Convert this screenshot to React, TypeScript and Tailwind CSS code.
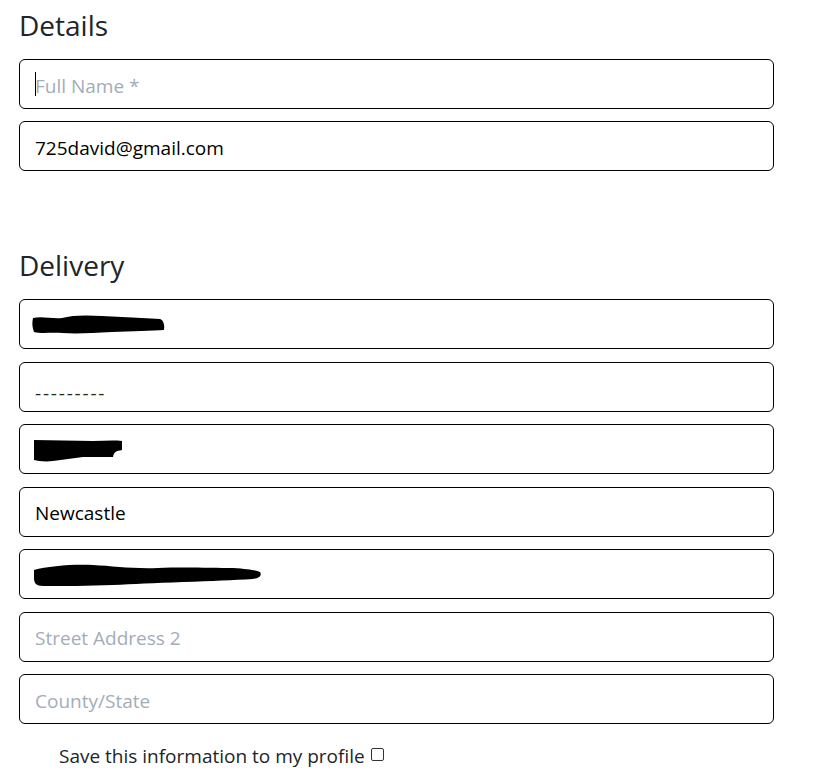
import React from "react";

const font = { fontFamily: '"Open Sans", "Noto Sans", Arial, sans-serif' };

function Field({ children }: { children?: React.ReactNode }) {
  return (
    <div className="h-[50px] w-full rounded-[6px] border border-black bg-white pl-[15px] pt-[4px] flex items-center text-[19px] text-black relative">
      {children}
    </div>
  );
}

function Placeholder({ text, caret }: { text: string; caret?: boolean }) {
  return (
    <span className="text-[#a3adb8] flex items-center">
      {caret && <span className="inline-block w-px h-[24px] bg-black mr-[-1px] -mt-[4px]" />}
      {text}
    </span>
  );
}

function Blob({ d, w, h }: { d: string; w: number; h: number }) {
  return (
    <svg width={w} height={h} viewBox={`0 0 ${w} ${h}`} className="absolute">
      <path d={d} fill="black" />
    </svg>
  );
}

export default function App() {
  return (
    <div className="w-[815px] h-[779px] bg-white text-[#212529]" style={font}>
      <div className="pl-[19px] w-[774px]">
        <h2 className="text-[28px] leading-[34px] pt-[8px] pb-[17px]">Details</h2>
        <div className="flex flex-col gap-[12px]">
          <Field>
            <Placeholder text="Full Name *" caret />
          </Field>
          <Field>725david@gmail.com</Field>
        </div>
        <h2 className="text-[28px] leading-[34px] pt-[77px] pb-[17px]">Delivery</h2>
        <div className="flex flex-col gap-[12.5px]">
          <Field>
            <div className="absolute left-[12px] top-[15px]">
              <Blob
                w={134}
                h={20}
                d="M1 3 C10 1 20 4 30 3 C40 0 55 0 70 1 C90 2 110 3 128 4 C131 5 133 9 132 15 C120 16 100 16 80 17 C60 18 45 19 30 18 C20 17 10 19 2 17 C0 12 0 7 1 3 Z"
              />
            </div>
          </Field>
          <Field>
            <span className="text-[19px] tracking-[1.8px] text-[#2a2a10] relative top-[5px]">---------</span>
          </Field>
          <Field>
            <div className="absolute left-[13px] top-[14px]">
              <Blob
                w={90}
                h={24}
                d="M1 1 L60 2 C70 2 80 1 89 2 L89 11 C83 12 81 13 80 18 C70 18 60 18 50 18 C40 19 30 21 20 22 C12 23 5 22 1 21 Z"
              />
            </div>
          </Field>
          <Field>Newcastle</Field>
          <Field>
            <div className="absolute left-[13px] top-[13px]">
              <Blob
                w={230}
                h={26}
                d="M1 7 C15 3 40 1 60 2 C80 3 100 6 125 5 C150 4 180 5 200 5 C215 6 222 7 227 9 C229 12 227 15 220 16 C200 17 180 18 150 19 C120 20 100 21 80 22 C55 23 30 23 10 23 C3 23 1 20 1 15 Z"
              />
            </div>
          </Field>
          <Field>
            <Placeholder text="Street Address 2" />
          </Field>
          <Field>
            <Placeholder text="County/State" />
          </Field>
        </div>
        <div className="pl-[40px] pt-[18px] flex items-center text-[19px] text-[#212529]">
          <span>Save this information to my profile</span>
          <span className="ml-[6px] -mt-[4px] inline-block w-[13px] h-[13px] border border-[#333] rounded-[2px] bg-white" />
        </div>
      </div>
    </div>
  );
}
